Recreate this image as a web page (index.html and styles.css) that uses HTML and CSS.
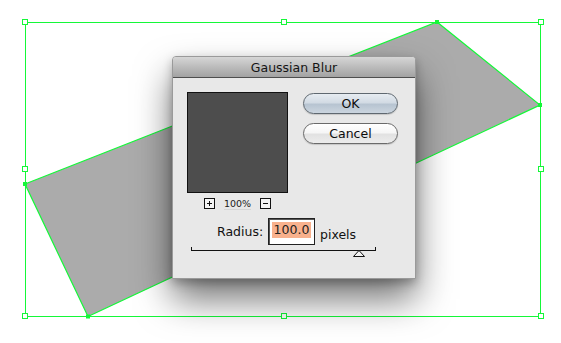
FILE: index.html
```html
<!DOCTYPE html>
<html lang="en">
<head>
    <meta charset="UTF-8">
    <title>Gaussian Blur</title>
    <link rel="stylesheet" href="styles.css">
</head>
<body>
    <div class="artboard">
        <svg class="canvas" width="561" height="343" viewBox="0 0 561 343">
            <polygon class="shape" points="25,184 437,22 540,105 88,316.5"/>
            <rect class="bbox" x="25.5" y="22.5" width="515" height="294"/>
            <!-- bounding box handles -->
            <g class="handle">
                <rect x="22.5" y="19.5" width="5" height="5"/>
                <rect x="281.5" y="19.5" width="5" height="5"/>
                <rect x="538.5" y="19.5" width="5" height="5"/>
                <rect x="22.5" y="166.5" width="5" height="5"/>
                <rect x="538.5" y="166.5" width="5" height="5"/>
                <rect x="22.5" y="313.5" width="5" height="5"/>
                <rect x="281.5" y="313.5" width="5" height="5"/>
                <rect x="538.5" y="313.5" width="5" height="5"/>
            </g>
            <!-- anchor points -->
            <g class="anchor">
                <rect x="23" y="182" width="4" height="4"/>
                <rect x="435" y="20" width="4" height="4"/>
                <rect x="538" y="103" width="4" height="4"/>
                <rect x="86" y="314.5" width="4" height="4"/>
            </g>
        </svg>

        <div class="dialog">
            <div class="titlebar">Gaussian Blur</div>
            <div class="dialog-body">
                <div class="top-row">
                    <div class="preview-col">
                        <div class="preview"></div>
                        <div class="zoom-row">
                            <span class="zoom-btn">
                                <svg width="11" height="11" viewBox="0 0 11 11"><rect x="0.5" y="0.5" width="10" height="10"/><path d="M3 5.5h5M5.5 3v5"/></svg>
                            </span>
                            <span class="zoom-value">100%</span>
                            <span class="zoom-btn">
                                <svg width="11" height="11" viewBox="0 0 11 11"><rect x="0.5" y="0.5" width="10" height="10"/><path d="M3 5.5h5"/></svg>
                            </span>
                        </div>
                    </div>
                    <div class="buttons">
                        <button class="btn btn-default">OK</button>
                        <button class="btn">Cancel</button>
                    </div>
                </div>

                <div class="radius-row">
                    <label class="radius-label">Radius:</label>
                    <div class="radius-input"><span class="selected">100.0</span></div>
                    <span class="unit">pixels</span>
                </div>

                <div class="slider">
                    <svg class="thumb" width="12" height="8" viewBox="0 0 12 8"><path d="M0.5 7.5L6 1.5 11.5 7.5Z"/></svg>
                </div>
            </div>
        </div>
    </div>
</body>
</html>
```

FILE: styles.css
```css
body {
    margin: 0;
    background-color: #fff;
    font-family: "DejaVu Sans", "Liberation Sans", sans-serif;
    color: #111;
}
.artboard {
    position: relative;
    width: 561px;
    height: 343px;
    overflow: hidden;
}
.canvas {
    position: absolute;
    left: 0;
    top: 0;
}
.shape {
    fill: #ababab;
    stroke: #14f838;
    stroke-width: 1.2;
}
.bbox {
    fill: none;
    stroke: #14f838;
    stroke-width: 1;
}
.handle rect {
    fill: #fff;
    stroke: #14f838;
    stroke-width: 1;
}
.anchor rect {
    fill: #14f838;
}

/* floating dialog */
.dialog {
    position: absolute;
    left: 172px;
    top: 56px;
    width: 244px;
    height: 223px;
    box-sizing: border-box;
    background-color: #e8e8e8;
    border: 1px solid #9a9a9a;
    border-radius: 4px 4px 0 0;
    box-shadow: 0 20px 36px rgba(0,0,0,0.55), 0 4px 10px rgba(0,0,0,0.25);
}
.titlebar {
    height: 20px;
    line-height: 21px;
    text-align: center;
    font-size: 12.5px;
    color: #141414;
    background: linear-gradient(#d6d6d6, #b6b6b6 60%, #a2a2a2);
    border-bottom: 1px solid #4e4e4e;
    border-radius: 3px 3px 0 0;
}
.dialog-body {
    padding: 14px 0 0 14px;
}
.top-row {
    display: flex;
    gap: 15px;
}
.preview {
    width: 99px;
    height: 99px;
    background-color: #4d4d4d;
    border: 1px solid #111;
}
.zoom-row {
    display: flex;
    align-items: center;
    justify-content: center;
    gap: 9px;
    width: 101px;
    margin-top: 5px;
    height: 11px;
}
.zoom-btn {
    display: flex;
}
.zoom-btn rect {
    fill: #f4f4f4;
    stroke: #111;
}
.zoom-btn path {
    stroke: #111;
    stroke-width: 1;
}
.zoom-value {
    font-size: 9.5px;
    line-height: 11px;
    color: #222;
    border-bottom: 1px solid #d6d6d6;
}
.buttons {
    display: flex;
    flex-direction: column;
    gap: 9px;
    padding-top: 1px;
}
.btn {
    width: 95px;
    height: 21px;
    padding: 0;
    font-family: inherit;
    font-size: 12.5px;
    color: #0c0c0c;
    border: 1px solid #6a6a6a;
    border-radius: 11px;
    background: linear-gradient(#ffffff, #f6f6f6 45%, #e2e2e2 55%, #ececec);
    box-shadow: 0 1px 1px rgba(0,0,0,0.15);
}
.btn-default {
    border-color: #5f6870;
    background: linear-gradient(#e7ecf1, #d2dbe4 45%, #b7c4d1 55%, #cbd5df);
}
.radius-row {
    display: flex;
    align-items: center;
    margin-top: 9px;
    padding-left: 30px;
    height: 27px;
}
.radius-label {
    font-size: 12.5px;
    width: 51px;
}
.radius-input {
    box-sizing: border-box;
    width: 47px;
    height: 27px;
    padding: 3px 3px 0 3px;
    background-color: #fff;
    border: 1px solid #222;
    box-shadow: inset 1px 1px 0 #555;
}
.selected {
    display: block;
    height: 16px;
    line-height: 16px;
    font-size: 12.5px;
    text-align: center;
    color: #222;
    background-color: #f8b18d;
}
.unit {
    font-size: 12.5px;
    margin: 6px 0 0 5px;
}
.slider {
    position: relative;
    width: 183px;
    height: 3px;
    margin: 2px 0 0 4px;
    border: 1px solid #111;
    border-top: none;
}
.thumb {
    position: absolute;
    left: 161px;
    top: 2px;
}
.thumb path {
    fill: #f2f2f2;
    stroke: #111;
}
```
